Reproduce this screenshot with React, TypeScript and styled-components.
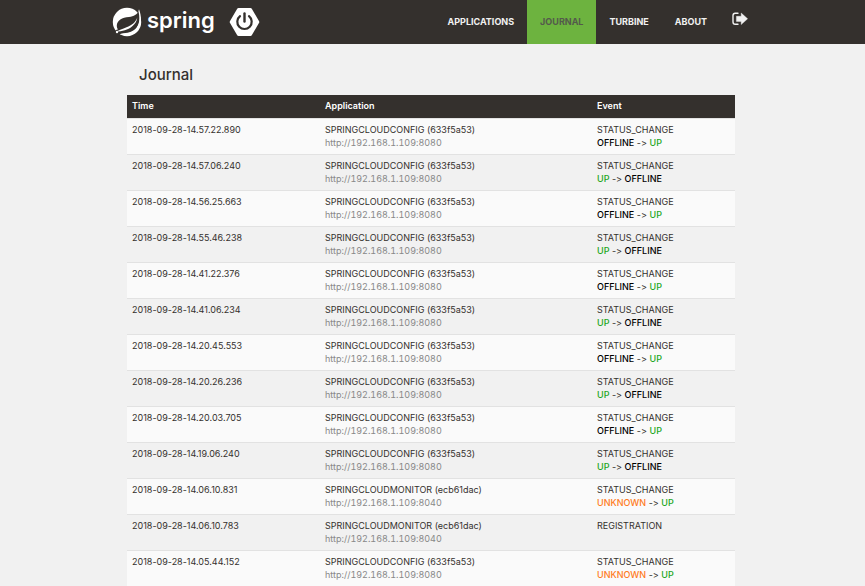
import React from 'react';
import styled, { createGlobalStyle } from 'styled-components';

const GlobalStyle = createGlobalStyle`
  * { box-sizing: border-box; }
  body {
    margin: 0;
    background: #f1f1f1;
    color: #34302d;
    font-family: Inter, 'Open Sans', sans-serif;
    font-size: 9px;
    line-height: 13px;
    font-variant-ligatures: no-contextual;
  }
`;

const Header = styled.header`
  background: #34302d;
  padding-right: 5px;
`;

const HeaderInner = styled.div`
  display: flex;
  justify-content: space-between;
  max-width: 636px;
  height: 44px;
  margin: 0 auto;
`;

const Brand = styled.a`
  display: flex;
  align-items: center;
  color: #fff;
  text-decoration: none;
`;

const BrandName = styled.span`
  margin: 0 14px 4px 5px;
  font-size: 22px;
  font-weight: 600;
  line-height: 26px;
`;

const Nav = styled.nav`
  display: flex;
`;

const NavLink = styled.a<{ $active?: boolean }>`
  display: flex;
  align-items: center;
  padding: 0 13px 2px;
  background: ${({ $active }) => ($active ? '#6db33f' : 'transparent')};
  color: ${({ $active }) => ($active ? '#54594c' : '#f1f1f1')};
  font-weight: 700;
  text-decoration: none;
  text-transform: uppercase;
`;

const LogoutButton = styled.button`
  display: flex;
  align-items: flex-start;
  padding: 12px 0 0 12px;
  border: 0;
  background: none;
  color: #f1f1f1;
`;

const Main = styled.main`
  padding: 20px 5px 0 0;
`;

const Content = styled.div`
  max-width: 636px;
  margin: 0 auto;
  padding: 0 13px 0 15px;
`;

const Title = styled.h1`
  margin: 0;
  padding: 0 12px 9px;
  font-size: 15px;
  font-weight: 500;
  line-height: 22px;
`;

const Table = styled.table`
  width: 100%;
  border-collapse: separate;
  border-spacing: 0;
  table-layout: fixed;
`;

const HeadCell = styled.th<{ $width: string }>`
  width: ${({ $width }) => $width};
  padding: 4px 5px 6px;
  background: #34302d;
  color: #fff;
  font-weight: 600;
  text-align: left;
`;

const Row = styled.tr`
  &:nth-child(odd) { background: #fafafa; }
`;

const Cell = styled.td`
  height: 36px;
  padding: 4px 5px 5px;
  border-top: 1px solid #e2e2e2;
  vertical-align: top;
`;

const Line = styled.div`
  line-height: 13px;
`;

const Url = styled(Line)`
  color: #888;
  font-variant-numeric: tabular-nums;
`;

type State = 'UP' | 'OFFLINE' | 'UNKNOWN';

const stateColors: Record<State, string> = {
  UP: '#22a722',
  OFFLINE: '#000',
  UNKNOWN: '#ff7a22',
};

const Status = styled.span<{ $state: State }>`
  color: ${({ $state }) => stateColors[$state]};
  font-weight: 500;
`;

function SpringLeaf() {
  return (
    <svg width="30" height="30" viewBox="0 0 30 30" aria-hidden="true">
      <circle cx="15" cy="15" r="14.2" fill="#fff" />
      <path d="M27 3.5C25 7.5 22 9.5 17 10C10 10.5 5 13.5 4.8 18.5C4.8 20.5 5.3 21.5 6 22.3C4.5 22.8 3.2 23.4 2.8 24.4L5.5 27C11 26.8 19 27 23.5 22.5C28.5 17 28.5 9.5 27 3.5Z" fill="#34302d" />
      <path d="M25.3 10.5C23.5 15.5 20 18.2 14.5 20.2C10.5 21.8 7 23 4.5 24.6C10 24.2 16 23 20 19.5C23 17 25 14 25.3 10.5Z" fill="#fff" />
      <path d="M27 2.2C29.8 9.5 29.8 17 25.5 22.5C21 28 13.5 27.2 7.5 27.4C13 25.6 18.5 26.4 23 22.3C28.3 17.4 27.9 10 26.4 4.2Z" fill="#fff" />
      <circle cx="5" cy="25" r="1.2" fill="#fff" />
    </svg>
  );
}

function PowerHexagon() {
  return (
    <svg width="31" height="28" viewBox="0 0 31 28" aria-hidden="true">
      <path d="M9.5 1.5H21.5L28.8 14L21.5 26.5H9.5L2.2 14Z" fill="#fff" stroke="#fff" strokeWidth="3" strokeLinejoin="round" />
      <path d="M11 8.2A7.2 7.2 0 1 0 20 8.2" fill="none" stroke="#34302d" strokeWidth="2.2" strokeLinecap="round" />
      <path d="M15.5 5.5V13.5" stroke="#34302d" strokeWidth="2.4" strokeLinecap="round" />
    </svg>
  );
}

function LogoutIcon() {
  return (
    <svg width="16" height="14" viewBox="0 0 16 14" aria-hidden="true">
      <path d="M6 1.2H3.2Q1 1.2 1 3.4V10Q1 12.2 3.2 12.2H6" fill="none" stroke="currentColor" strokeWidth="1.4" strokeLinecap="round" />
      <path d="M9.2 1L15.6 6.8L9.2 12.6V9.4H4.4V4.3H9.2Z" fill="currentColor" stroke="currentColor" strokeWidth="0.4" strokeLinejoin="round" />
    </svg>
  );
}

interface Entry {
  time: string;
  app?: 'monitor';
  change?: [State, State];
}

const entries: Entry[] = [
  { time: '14.57.22.890', change: ['OFFLINE', 'UP'] },
  { time: '14.57.06.240', change: ['UP', 'OFFLINE'] },
  { time: '14.56.25.663', change: ['OFFLINE', 'UP'] },
  { time: '14.55.46.238', change: ['UP', 'OFFLINE'] },
  { time: '14.41.22.376', change: ['OFFLINE', 'UP'] },
  { time: '14.41.06.234', change: ['UP', 'OFFLINE'] },
  { time: '14.20.45.553', change: ['OFFLINE', 'UP'] },
  { time: '14.20.26.236', change: ['UP', 'OFFLINE'] },
  { time: '14.20.03.705', change: ['OFFLINE', 'UP'] },
  { time: '14.19.06.240', change: ['UP', 'OFFLINE'] },
  { time: '14.06.10.831', app: 'monitor', change: ['UNKNOWN', 'UP'] },
  { time: '14.06.10.783', app: 'monitor' },
  { time: '14.05.44.152', change: ['UNKNOWN', 'UP'] },
];

export default function App() {
  return (
    <>
      <GlobalStyle />
      <Header>
        <HeaderInner>
          <Brand href="#" aria-label="Spring Boot">
            <SpringLeaf />
            <BrandName>spring</BrandName>
            <PowerHexagon />
          </Brand>
          <Nav>
            <NavLink href="#applications">Applications</NavLink>
            <NavLink href="#journal" $active>Journal</NavLink>
            <NavLink href="#turbine">Turbine</NavLink>
            <NavLink href="#about">About</NavLink>
            <LogoutButton type="button" aria-label="Log out"><LogoutIcon /></LogoutButton>
          </Nav>
        </HeaderInner>
      </Header>
      <Main>
        <Content>
          <Title>Journal</Title>
          <Table>
            <thead>
              <tr>
                <HeadCell scope="col" $width="193px">Time</HeadCell>
                <HeadCell scope="col" $width="272px">Application</HeadCell>
                <HeadCell scope="col" $width="auto">Event</HeadCell>
              </tr>
            </thead>
            <tbody>
              {entries.map(({ time, app, change }) => (
                <Row key={time}>
                  <Cell>2018-09-28-{time}</Cell>
                  <Cell>
                    <Line>{app ? 'SPRINGCLOUDMONITOR (ecb61dac)' : 'SPRINGCLOUDCONFIG (633f5a53)'}</Line>
                    <Url>http://192.168.1.109:{app ? '8040' : '8080'}</Url>
                  </Cell>
                  <Cell>
                    <Line>{change ? 'STATUS_CHANGE' : 'REGISTRATION'}</Line>
                    {change && (
                      <Line>
                        <Status $state={change[0]}>{change[0]}</Status> -&gt;{' '}
                        <Status $state={change[1]}>{change[1]}</Status>
                      </Line>
                    )}
                  </Cell>
                </Row>
              ))}
            </tbody>
          </Table>
        </Content>
      </Main>
    </>
  );
}
